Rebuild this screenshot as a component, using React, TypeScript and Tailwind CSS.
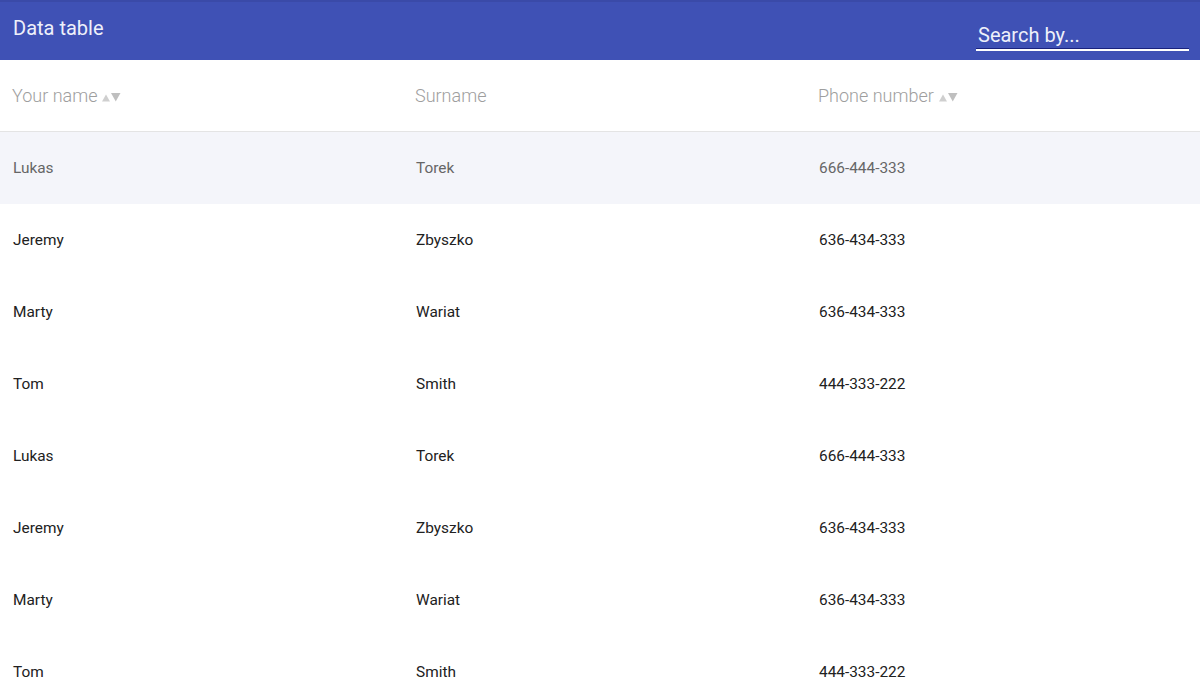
const rows = [
  ["Lukas", "Torek", "666-444-333"],
  ["Jeremy", "Zbyszko", "636-434-333"],
  ["Marty", "Wariat", "636-434-333"],
  ["Tom", "Smith", "444-333-222"],
  ["Lukas", "Torek", "666-444-333"],
  ["Jeremy", "Zbyszko", "636-434-333"],
  ["Marty", "Wariat", "636-434-333"],
  ["Tom", "Smith", "444-333-222"],
]

const Sort = () => (
  <svg width="19" height="12" viewBox="0 0 19 12" className="ml-[5px] mt-[2px]">
    <path d="M0 10.5 L4 3.5 L8 10.5 Z" fill="#cfcfcf" />
    <path d="M9 2 L18.5 2 L13.75 10.5 Z" fill="#bfbfbf" />
  </svg>
)

const App = () => {
  return (
    <div className="w-[1200px] h-[681px] overflow-hidden bg-white font-['Roboto',sans-serif]">
      <div className="h-[60px] bg-[#3f51b5] border-t-2 border-[#3a4aa8] flex items-start justify-between">
        <div className="pl-[13px] pt-[11px] text-[20px] text-[#eef0fa]">Data table</div>
        <div className="mr-[11px] mt-[20px] w-[213px] border-b-2 border-white shadow-[0_-1px_0_#1a237e_inset]">
          <input
            placeholder="Search by..."
            className="w-full bg-transparent pl-[2px] pb-0 text-[20px] leading-[26px] text-white placeholder:text-[#eef0fa] outline-none"
          />
        </div>
      </div>

      <div className="grid grid-cols-[403px_403px_1fr] h-[72px] items-center border-b border-[#e4e4e4] text-[18px] font-light text-[#9e9e9e]">
        <div className="pl-[12px] flex items-center">Your name<Sort /></div>
        <div className="pl-[12px]">Surname</div>
        <div className="pl-[12px] flex items-center">Phone number<Sort /></div>
      </div>

      {rows.map((r, i) => (
        <div
          key={i}
          className={
            i === 0
              ? "grid grid-cols-[403px_403px_1fr] h-[72px] pt-[2px] items-center bg-[#f4f5fa] text-[15.4px] text-[#666666]"
              : "grid grid-cols-[403px_403px_1fr] h-[72px] pt-[2px] items-center text-[15.4px] text-[#212121]"
          }
        >
          <div className="pl-[13px]">{r[0]}</div>
          <div className="pl-[13px]">{r[1]}</div>
          <div className="pl-[13px]">{r[2]}</div>
        </div>
      ))}
    </div>
  )
}

export default App
